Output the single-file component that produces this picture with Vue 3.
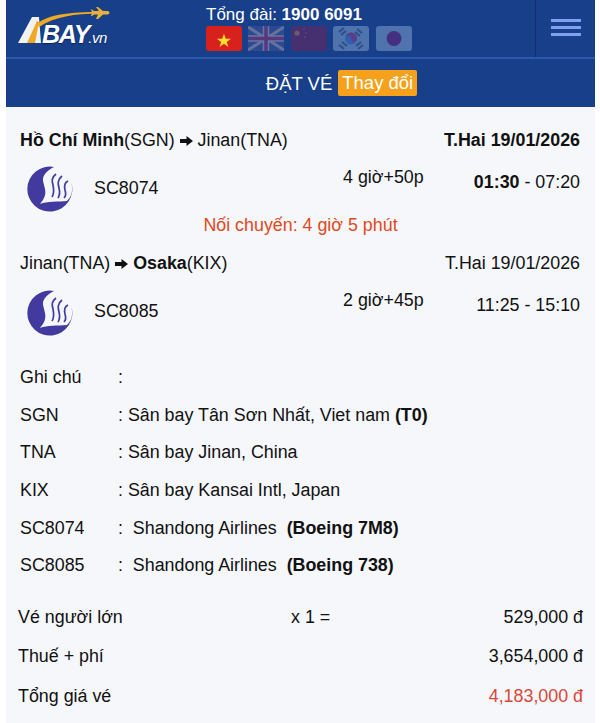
<script setup>
const notes = [
  { code: 'Ghi chú', text: ':' },
  { code: 'SGN', text: ': Sân bay Tân Sơn Nhất, Viet nam ', bold: '(T0)' },
  { code: 'TNA', text: ': Sân bay Jinan, China' },
  { code: 'KIX', text: ': Sân bay Kansai Intl, Japan' },
  { code: 'SC8074', text: ':\u00a0 Shandong Airlines\u00a0 ', bold: '(Boeing 7M8)' },
  { code: 'SC8085', text: ':\u00a0 Shandong Airlines\u00a0 ', bold: '(Boeing 738)' }
]
</script>

<template>
  <div class="page">
    <header class="head">
      <div class="top">
        <div class="logo">
          <svg class="logo-mark" width="100" height="44" viewBox="0 0 100 44">
            <path d="M0 38 L14 12 H21 L23 38 Z" fill="#f2f2f2" />
            <path d="M9 38 L19 16 L21 17 L17 38 Z" fill="#eeaa24" />
            <path d="M19 19 C30 9 54 7 80 7 L80 8.6 C58 8.6 36 12 21 22 Z" fill="#eeaa24" />
            <path d="M78 2 L80 2 L85 6 L90 6 Q93 8 90 9.5 L85 9.5 L80 14 L78 14 L80 9.5 L76 9.5 L74 11 L73 11 L74 7.5 L73 4.5 L74 4.5 L76 6 L81 6 Z" fill="#e9b13a" />
          </svg>
          <span class="logo-text">BAY<small>.vn</small></span>
        </div>
        <div class="center">
          <div class="hotline">Tổng đài: <b>1900 6091</b></div>
          <div class="flags">
            <svg class="flag" viewBox="0 0 36 25"><rect width="36" height="25" rx="3" fill="#d8201c" /><path d="M18 6 l2.1 6.3 h6.6 l-5.3 3.9 2 6.3 -5.4-3.9 -5.4 3.9 2-6.3 -5.3-3.9 h6.6 z" fill="#ffdd2c" transform="translate(3.2 2.6) scale(.82)" /></svg>
            <svg class="flag" viewBox="0 0 36 25"><rect width="36" height="25" fill="#2e4a8f" /><path d="M0 1 L36 24 M36 1 L0 24" stroke="#64729f" stroke-width="3" /><path d="M18 0 V25 M0 12.5 H36" stroke="#6a76a3" stroke-width="6.5" /><path d="M18 0 V25 M0 12.5 H36" stroke="#56387f" stroke-width="3.5" /></svg>
            <svg class="flag" viewBox="0 0 36 25"><rect width="36" height="25" rx="3" fill="#46306f" /><circle cx="6" cy="7" r="2.6" fill="#6b5b71" /><circle cx="13" cy="3" r="1" fill="#5a4670" /><circle cx="15" cy="7" r="1" fill="#5a4670" /><circle cx="14" cy="11" r="1" fill="#5a4670" /></svg>
            <svg class="flag" viewBox="0 0 36 25"><rect width="36" height="25" rx="3" fill="#4e73ad" /><path d="M6 6 L11 2 M8 9 L13 5 M24 3 L29 7 M22 6 L27 10 M6 19 L11 23 M9 16 L14 20 M23 20 L28 16 M25 23 L30 19" stroke="#2f4d88" stroke-width="2" /><circle cx="18" cy="12.5" r="6" fill="#2f5fb3" /><path d="M12 12.5 a6 6 0 0 1 12 0 a3 3 0 0 1 -6 0 a3 3 0 0 0 -6 0" fill="#5a3f86" /></svg>
            <svg class="flag" viewBox="0 0 36 25"><rect width="36" height="25" rx="3" fill="#4e73ad" /><circle cx="18" cy="12.5" r="7.4" fill="#452f80" /></svg>
          </div>
        </div>
        <div class="menu">
          <span></span><span></span><span></span>
        </div>
      </div>
      <div class="title">
        <span>ĐẶT VÉ</span>
        <span class="change">Thay đổi</span>
      </div>
    </header>

    <main class="body">
      <section class="leg first">
        <div class="route">
          <div><b>Hồ Chí Minh</b>(SGN) <svg class="arrow" width="13" height="12" viewBox="0 0 13 12"><path d="M0 4 H6.5 V1 L13 6 L6.5 11 V8 H0 Z" fill="#111" /></svg> Jinan(TNA)</div>
          <b>T.Hai 19/01/2026</b>
        </div>
        <div class="flight">
          <svg class="airline" width="46" height="46" viewBox="0 0 46 46">
            <path d="M27 1 A22.5 22.5 0 1 0 44.5 17 C46 25 45 30 40 35 C31 36 20 35 13 38 C18 32 19 28 18 23 C17 17 14 13 18 8 C20 5 23 3 27 1 Z" fill="#423a9e" />
            <path d="M29 8 C24 12 25 15 26 19 C27 24 27 28 25 31 M35 10 C30 14 31 18 32 22 C33 26 33 29 31 32 M41 15 C37 17 37 20 38 24 C39 27 39 30 37 32" fill="none" stroke="#423a9e" stroke-width="1.7" />
          </svg>
          <span class="code">SC8074</span>
          <span class="dur">4 giờ+50p</span>
          <span class="time"><b>01:30</b> - 07:20</span>
        </div>
      </section>
      <div class="transfer">Nối chuyến: 4 giờ 5 phút</div>
      <section class="leg second">
        <div class="route">
          <div>Jinan(TNA) <svg class="arrow" width="13" height="12" viewBox="0 0 13 12"><path d="M0 4 H6.5 V1 L13 6 L6.5 11 V8 H0 Z" fill="#111" /></svg> <b>Osaka</b>(KIX)</div>
          <span>T.Hai 19/01/2026</span>
        </div>
        <div class="flight">
          <svg class="airline" width="46" height="46" viewBox="0 0 46 46">
            <path d="M27 1 A22.5 22.5 0 1 0 44.5 17 C46 25 45 30 40 35 C31 36 20 35 13 38 C18 32 19 28 18 23 C17 17 14 13 18 8 C20 5 23 3 27 1 Z" fill="#423a9e" />
            <path d="M29 8 C24 12 25 15 26 19 C27 24 27 28 25 31 M35 10 C30 14 31 18 32 22 C33 26 33 29 31 32 M41 15 C37 17 37 20 38 24 C39 27 39 30 37 32" fill="none" stroke="#423a9e" stroke-width="1.7" />
          </svg>
          <span class="code">SC8085</span>
          <span class="dur">2 giờ+45p</span>
          <span class="time">11:25 - 15:10</span>
        </div>
      </section>

      <section class="notes">
        <div v-for="n in notes" :key="n.code" class="note">
          <span>{{ n.code }}</span>
          <span>{{ n.text }}<b v-if="n.bold">{{ n.bold }}</b></span>
        </div>
      </section>

      <section class="prices">
        <div class="price"><span>Vé người lớn</span><span>x 1 =</span><span class="amt">529,000 đ</span></div>
        <div class="price"><span>Thuế + phí</span><span></span><span class="amt">3,654,000 đ</span></div>
        <div class="price"><span>Tổng giá vé</span><span></span><span class="amt red">4,183,000 đ</span></div>
      </section>
    </main>
  </div>
</template>

<style scoped>
.page {
  width: 589px;
  margin-left: 6px;
  height: 723px;
  overflow: hidden;
  font-family: "Liberation Sans", Arial, sans-serif;
  font-size: 17.85px;
  color: #111;
  background: #f5f7fb;
}
.head { background: #173f8a; color: #fff; }
.top {
  display: flex;
  height: 57px;
  border-bottom: 2px solid #2b59ae;
}
.logo { position: relative; width: 185px; flex: none; }
.logo-mark { position: absolute; left: 12px; top: 5px; }
.logo-text {
  position: absolute;
  left: 36px;
  top: 19px;
  font-size: 25px;
  line-height: 30px;
  font-weight: 700;
  font-style: italic;
  letter-spacing: -1.2px;
  color: #fff;
  text-shadow: 0 1px 1px #0b2458;
}
.logo-text small { font-size: 15px; font-weight: 400; letter-spacing: -0.5px; margin-left: -1px; }
.center { width: 344px; flex: none; }
.hotline { margin-top: 5px; margin-left: 15px; line-height: 20px; font-size: 17px; }
.flags { display: flex; gap: 6.4px; margin-top: 1px; margin-left: 15px; }
.flag { width: 36px; height: 25px; display: block; }
.menu {
  flex: 1;
  border-left: 1px solid #0f2f6f;
  display: flex;
  flex-direction: column;
  align-items: center;
  justify-content: center;
  gap: 4px;
  padding-bottom: 3px;
}
.menu span { display: block; width: 30px; height: 3px; background: #7fa0ee; }
.title {
  height: 48px;
  display: flex;
  align-items: center;
  justify-content: center;
  gap: 6px;
  font-size: 18.5px;
  padding-left: 82px;
}
.title span:first-child { padding-top: 1px; }
.change {
  background: #f5a11c;
  border-radius: 2px;
  padding: 0 4px;
  line-height: 26px;
  height: 26px;
}
.leg { padding: 0 15px 0 14px; }
.first { padding-top: 22px; }
.second { padding-top: 16px; }
.route { display: flex; justify-content: space-between; line-height: 22px; }
.arrow { vertical-align: -1px; }
.flight { display: flex; height: 60px; align-items: flex-start; }
.airline { margin: 15px 0 0 7px; flex: none; }
.second .airline { margin-top: 16px; }
.code { margin: 27px 0 0 21px; width: 249px; flex: none; }
.dur { margin-top: 16px; flex: 1; white-space: nowrap; }
.time { margin-top: 21px; white-space: nowrap; }
.transfer { color: #e2481a; text-align: center; line-height: 22px; margin-top: 3px; }
.notes { padding: 25px 14px 0; }
.note { display: grid; grid-template-columns: 98px 1fr; height: 37.6px; align-items: center; }
.prices { padding: 13px 12px 0; }
.price {
  display: grid;
  grid-template-columns: 273px 1fr auto;
  height: 39.5px;
  align-items: center;
}
.amt { text-align: right; }
.red { color: #d8473a; }
</style>

<style>
html, body { background: #fff; }
</style>
